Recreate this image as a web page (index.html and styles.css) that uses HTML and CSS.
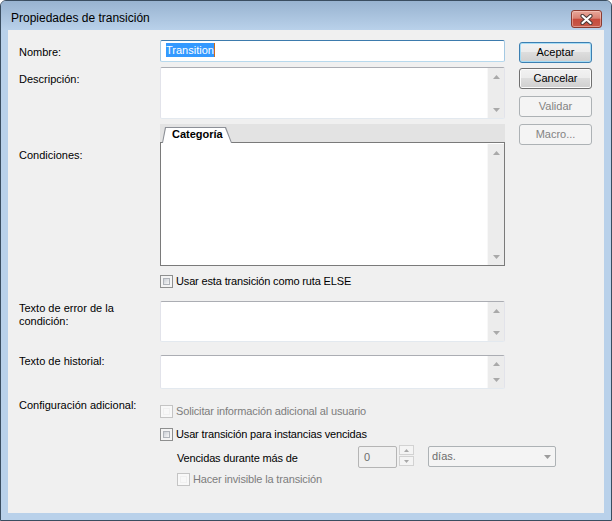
FILE: index.html
```html
<!DOCTYPE html>
<html lang="es">
<head>
<meta charset="utf-8">
<title>Propiedades de transición</title>
<link rel="stylesheet" href="styles.css">
</head>
<body>
<div class="window">
  <div class="titlebar">
    <span class="title">Propiedades de transición</span>
    <div class="close">
      <svg width="13" height="11" viewBox="0 0 13 11"><path d="M2.5 2 L10.5 9 M10.5 2 L2.5 9" stroke="#4a3a38" stroke-width="4.2" stroke-linecap="round"/><path d="M2.5 2 L10.5 9 M10.5 2 L2.5 9" stroke="#ffffff" stroke-width="2.2" stroke-linecap="round"/></svg>
    </div>
  </div>
  <div class="client">
    <div class="form">
      <div class="row">
        <div class="label lb-name">Nombre:</div>
        <div class="field">
          <div class="input"><span class="sel">Transition</span><span class="caret"></span></div>
        </div>
      </div>

      <div class="row r-desc">
        <div class="label lb-desc">Descripción:</div>
        <div class="field">
          <div class="tb h-desc">
            <div class="sb">
              <div class="sb-btn"><svg class="arr" viewBox="0 0 7 4"><path d="M0 4 L3.5 0 L7 4Z"/></svg></div>
              <div class="sb-btn"><svg class="arr" viewBox="0 0 7 4"><path d="M0 0 L7 0 L3.5 4Z"/></svg></div>
            </div>
          </div>
        </div>
      </div>

      <div class="row r-cond">
        <div class="label lb-cond">Condiciones:</div>
        <div class="field">
          <div class="tabctl">
            <div class="tabstrip">
              <div class="tab"><div class="tab-in">Categoría</div></div>
            </div>
            <div class="tabpanel">
              <div class="sb">
                <div class="sb-btn"><svg class="arr" viewBox="0 0 7 4"><path d="M0 4 L3.5 0 L7 4Z"/></svg></div>
                <div class="sb-btn"><svg class="arr" viewBox="0 0 7 4"><path d="M0 0 L7 0 L3.5 4Z"/></svg></div>
              </div>
            </div>
          </div>
        </div>
      </div>

      <div class="row r-else">
        <div class="label"></div>
        <div class="field">
          <div class="check"><span class="cb"></span><span class="ct">Usar esta transición como ruta ELSE</span></div>
        </div>
      </div>

      <div class="row r-err">
        <div class="label lb-err">Texto de error de la<br>condición:</div>
        <div class="field">
          <div class="tb h-err">
            <div class="sb">
              <div class="sb-btn"><svg class="arr" viewBox="0 0 7 4"><path d="M0 4 L3.5 0 L7 4Z"/></svg></div>
              <div class="sb-btn"><svg class="arr" viewBox="0 0 7 4"><path d="M0 0 L7 0 L3.5 4Z"/></svg></div>
            </div>
          </div>
        </div>
      </div>

      <div class="row r-hist">
        <div class="label lb-hist">Texto de historial:</div>
        <div class="field">
          <div class="tb h-hist">
            <div class="sb">
              <div class="sb-btn"><svg class="arr" viewBox="0 0 7 4"><path d="M0 4 L3.5 0 L7 4Z"/></svg></div>
              <div class="sb-btn"><svg class="arr" viewBox="0 0 7 4"><path d="M0 0 L7 0 L3.5 4Z"/></svg></div>
            </div>
          </div>
        </div>
      </div>

      <div class="row r-conf">
        <div class="label lb-conf">Configuración adicional:</div>
        <div class="field">
          <div class="check dis c1"><span class="cb"></span><span class="ct">Solicitar información adicional al usuario</span></div>
          <div class="check c2"><span class="cb"></span><span class="ct">Usar transición para instancias vencidas</span></div>
          <div class="vrow">
            <div class="vlabel ct">Vencidas durante más de</div>
            <div class="spin-in">0</div>
            <div class="spin">
              <div class="spin-btn"><svg class="sarr" viewBox="0 0 5 3"><path d="M0 3 L2.5 0 L5 3Z"/></svg></div>
              <div class="spin-btn"><svg class="sarr" viewBox="0 0 5 3"><path d="M0 0 L5 0 L2.5 3Z"/></svg></div>
            </div>
            <div class="combo"><span>días.</span><svg class="carr" viewBox="0 0 7 4"><path d="M0 0 L7 0 L3.5 4Z"/></svg></div>
          </div>
          <div class="check dis c4"><span class="cb"></span><span class="ct">Hacer invisible la transición</span></div>
        </div>
      </div>
    </div>

    <div class="buttons">
      <div class="btn default b1">Aceptar</div>
      <div class="btn b2">Cancelar</div>
      <div class="btn dis b3">Validar</div>
      <div class="btn dis b4">Macro...</div>
    </div>
  </div>
</div>
</body>
</html>
```

FILE: styles.css
```css
html, body {
  margin: 0;
  padding: 0;
  background: #ffffff;
}
body {
  font-family: "Liberation Sans", Arial, sans-serif;
  font-size: 11px;
  line-height: 13px;
  color: #000;
}
.window {
  width: 612px;
  height: 521px;
  box-sizing: border-box;
  border: 1px solid #3a4d60;
  border-radius: 6px 6px 0 0;
  background: #b9d1ea;
  display: flex;
  flex-direction: column;
  overflow: hidden;
}
.titlebar {
  height: 29px;
  flex: none;
  display: flex;
  justify-content: space-between;
  align-items: flex-start;
  background: linear-gradient(#98b3d0, #b9d1ea);
  padding: 0 9px 0 10px;
}
.title {
  margin-top: 10px;
  font-size: 12px;
  line-height: 15px;
  color: #000;
}
.close {
  margin-top: 9px;
  width: 31px;
  height: 18px;
  box-sizing: border-box;
  border: 1px solid #8a3b30;
  border-radius: 3px;
  background: linear-gradient(#e8a89b 0%, #d98273 45%, #c64b3c 52%, #c85a4a 100%);
  box-shadow: inset 0 0 0 1px rgba(255, 220, 210, 0.45);
  display: flex;
  align-items: center;
  justify-content: center;
}
.client {
  flex: 1;
  margin: 0 7px 7px 7px;
  background: #f0f0f0;
  display: flex;
  padding: 10px 0 0 11px;
}
.form {
  width: 486px;
  flex: none;
  display: flex;
  flex-direction: column;
}
.row {
  display: flex;
}
.label {
  width: 141px;
  flex: none;
}
.field {
  width: 345px;
  flex: none;
}
.lb-name { padding-top: 6px; }
.lb-desc { padding-top: 6px; }
.lb-cond { padding-top: 25px; }
.lb-err { padding-top: 1px; }
.lb-hist { padding-top: 0; }
.lb-conf { padding-top: 0; }

.r-desc { margin-top: 5px; }
.r-cond { margin-top: 5px; }
.r-else { margin-top: 9px; }
.r-err { margin-top: 13px; }
.r-hist { margin-top: 13px; }
.r-conf { margin-top: 10px; }

.ct { letter-spacing: -0.15px; }

.input {
  height: 22px;
  box-sizing: border-box;
  border: 1px solid;
  border-color: #3d7bad #a4c9e3 #b7d9ed #a4c9e3;
  border-radius: 2px;
  background: #fff;
  display: flex;
  align-items: flex-start;
  padding: 2px 0 0 5px;
}
.sel {
  background: #3399ff;
  color: #fff;
  line-height: 14px;
}
.caret {
  width: 1px;
  height: 14px;
  background: #cc6a1a;
}

.tb {
  box-sizing: border-box;
  border: 1px solid;
  border-color: #abadb3 #e2e3ea #e3e9ef #e2e3ea;
  border-radius: 2px;
  background: #fff;
  display: flex;
  justify-content: flex-end;
}
.h-desc { height: 52px; }
.h-err { height: 41px; }
.h-hist { height: 34px; }

.sb {
  width: 17px;
  box-sizing: border-box;
  border-left: 1px solid #f8f8f8;
  background: #ececec;
  display: flex;
  flex-direction: column;
  justify-content: space-between;
}
.sb-btn {
  height: 17px;
  min-height: 0;
  flex-shrink: 1;
  display: flex;
  align-items: center;
  justify-content: center;
}
.arr {
  width: 7px;
  height: 4px;
  fill: #a9a9a9;
}

.tabctl {
  height: 142px;
  display: flex;
  flex-direction: column;
}
.tabstrip {
  height: 18px;
  flex: none;
  background: #e3e3e3;
  display: flex;
  align-items: flex-start;
}
.tab {
  position: relative;
  z-index: 1;
  margin: 3px 0 -1px 2px;
  width: 70px;
  height: 16px;
  box-sizing: border-box;
  padding: 1px 1px 0 1px;
  background: #8d9097;
  clip-path: polygon(0 100%, 3px 0, calc(100% - 6px) 0, 100% 100%);
}
.tab-in {
  height: 100%;
  background: #fff;
  clip-path: polygon(0 100%, 3px 0, calc(100% - 6px) 0, 100% 100%);
  font-weight: bold;
  line-height: 13px;
  padding-left: 9px;
}
.tabpanel {
  flex: 1;
  box-sizing: border-box;
  border: 1px solid #7a7a7a;
  background: #fff;
  display: flex;
  justify-content: flex-end;
  padding-top: 1px;
}

.check {
  display: flex;
  align-items: center;
  gap: 3px;
  height: 13px;
}
.cb {
  width: 13px;
  height: 13px;
  flex: none;
  box-sizing: border-box;
  border: 1px solid #8e8f8f;
  background: #f4f4f4;
  padding: 2px;
}
.cb::after {
  content: "";
  display: block;
  width: 100%;
  height: 100%;
  box-sizing: border-box;
  border: 1px solid #b0b4ba;
  background: linear-gradient(135deg, #cbcfd5, #f7f7f7);
}
.check.dis { color: #7d7d7d; }
.check.dis .cb {
  border-color: #c4c4c4;
  background: #f8f8f8;
}
.check.dis .cb::after {
  border-color: #f0f0f0;
  background: #f8f8f8;
}
.c1 { margin-top: 6px; }
.c2 { margin-top: 10px; }
.c4 { margin-top: 5px; margin-left: 17px; }

.vrow {
  display: flex;
  align-items: flex-start;
  height: 23px;
  margin-top: 4px;
}
.vrow > * {
  flex: none;
}
.vlabel {
  width: 198px;
  box-sizing: border-box;
  padding: 7px 0 0 17px;
}
.spin-in {
  margin-top: 1px;
  width: 39px;
  height: 22px;
  box-sizing: border-box;
  border: 1px solid #b5b5b5;
  border-radius: 2px;
  background: #f0f0f0;
  padding-left: 5px;
  line-height: 20px;
  color: #6d6d6d;
}
.spin {
  margin-left: 2px;
  width: 15px;
  display: flex;
  flex-direction: column;
  gap: 1px;
}
.spin-btn {
  height: 10px;
  box-sizing: border-box;
  border: 1px solid #d2d2d2;
  background: #f4f4f4;
  display: flex;
  align-items: center;
  justify-content: center;
}
.sarr {
  width: 5px;
  height: 3px;
  fill: #a8a8a8;
}
.combo {
  margin: 1px 0 0 14px;
  width: 128px;
  height: 21px;
  box-sizing: border-box;
  border: 1px solid #adb2b5;
  border-radius: 2px;
  background: #f4f4f4;
  display: flex;
  align-items: center;
  padding: 0 4px 0 3px;
  color: #6d6d6d;
}
.carr {
  margin-left: auto;
  width: 7px;
  height: 4px;
  fill: #9c9c9c;
}

.buttons {
  margin-left: 14px;
  width: 73px;
  flex: none;
  display: flex;
  flex-direction: column;
}
.btn {
  height: 21px;
  box-sizing: border-box;
  border: 1px solid #707070;
  border-radius: 3px;
  background: linear-gradient(#f2f2f2 0%, #ebebeb 50%, #dddddd 50%, #cfcfcf 100%);
  box-shadow: inset 0 0 0 1px #fbfbfb;
  display: flex;
  align-items: center;
  justify-content: center;
  color: #000;
}
.btn.default {
  border-color: #3c7fb1;
  box-shadow: inset 0 0 0 1px #a6dcf5;
}
.btn.dis {
  border-color: #adb2b5;
  background: #f4f4f4;
  box-shadow: none;
  color: #838383;
}
.b1 { margin-top: 2px; }
.b2 { margin-top: 5px; }
.b3 { margin-top: 7px; }
.b4 { margin-top: 7px; }
```
